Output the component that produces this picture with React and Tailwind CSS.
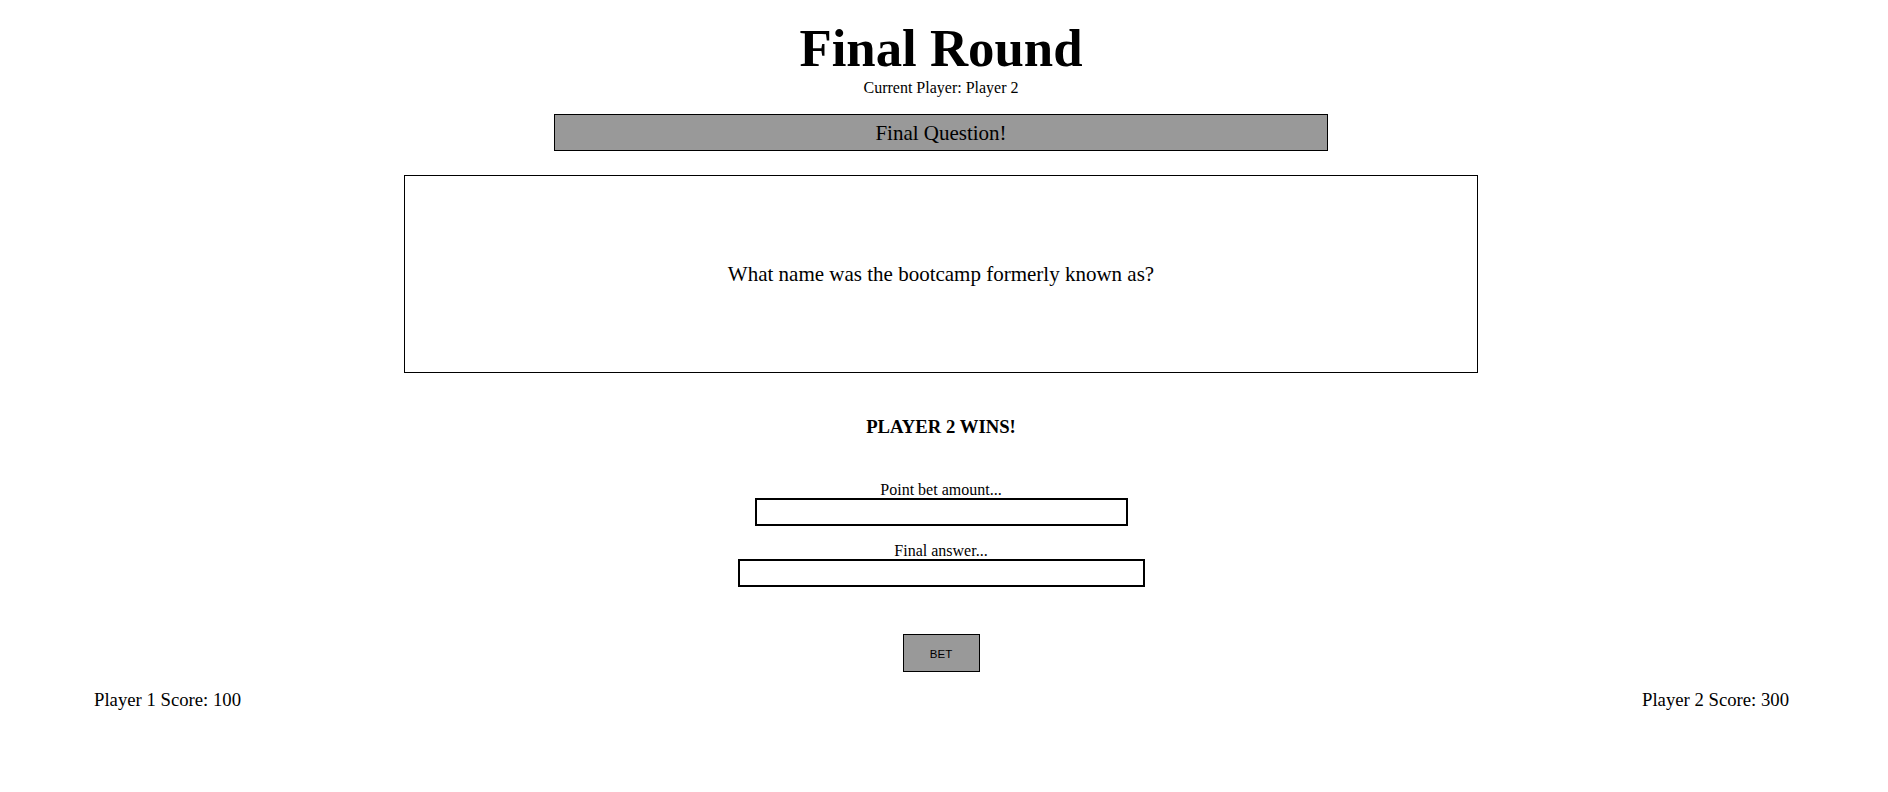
export default function App() {
  return (
    <div
      className="w-[1882px] flex flex-col items-center text-black bg-white"
      style={{ fontFamily: '"Liberation Serif", "Times New Roman", serif' }}
    >
      <h1 className="mt-[20px] text-[52.8px] leading-[56px] font-bold">Final Round</h1>
      <div className="mt-[3px] text-[16px] leading-[18px]">Current Player: Player 2</div>
      <div className="mt-[17px] box-border w-[774px] h-[37px] border border-black bg-[#999999] flex items-center justify-center">
        <span className="text-[21px] leading-[24px]">Final Question!</span>
      </div>
      <div className="mt-[24px] box-border w-[1074px] h-[198px] border border-black flex items-center justify-center">
        <span className="text-[21px] leading-[24px]">What name was the bootcamp formerly known as?</span>
      </div>
      <h3 className="mt-[43px] text-[18.72px] leading-[22px] font-bold">PLAYER 2 WINS!</h3>
      <label className="mt-[43px] text-[16px] leading-[17px]">Point bet amount...</label>
      <input className="box-border w-[373px] h-[28px] border-2 border-black bg-white outline-none" />
      <label className="mt-[16px] text-[16px] leading-[17px]">Final answer...</label>
      <input className="box-border w-[407px] h-[28px] border-2 border-black bg-white outline-none" />
      <button
        className="mt-[47px] box-border w-[77px] h-[38px] pt-[3px] border border-black bg-[#999999] text-[11.5px] text-black flex items-center justify-center"
        style={{ fontFamily: '"Liberation Sans", Arial, sans-serif' }}
      >
        BET
      </button>
      <div className="mt-[17px] w-full pl-[94px] pr-[93px] flex justify-between text-[18.72px] leading-[22px]">
        <span>Player 1 Score: 100</span>
        <span>Player 2 Score: 300</span>
      </div>
    </div>
  );
}
